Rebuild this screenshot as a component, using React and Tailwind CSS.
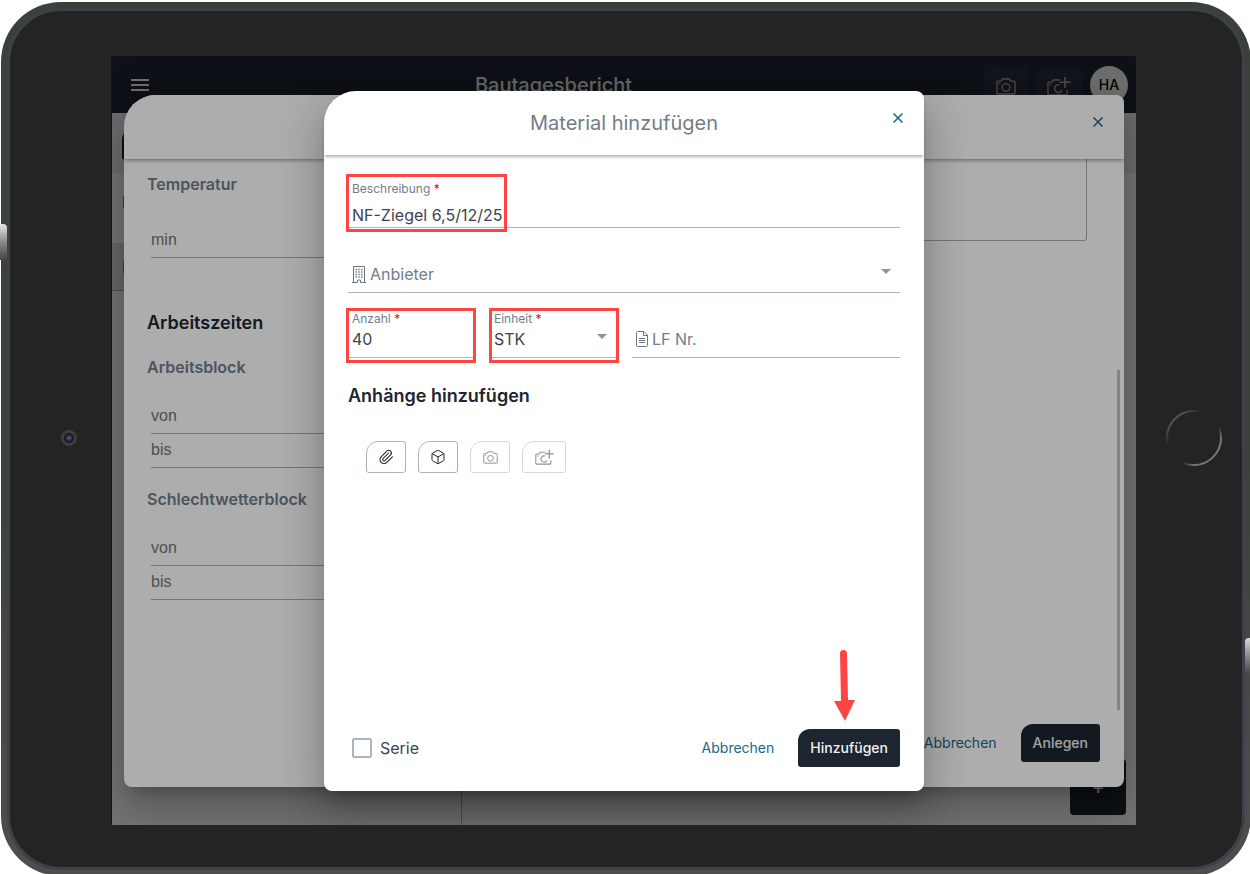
import { useState } from "react";
import { Box, Paperclip } from "lucide-react";

const lineCls = "w-full bg-transparent border-b border-[#a9b5c2] outline-none text-base text-[#3b444f] placeholder:text-[#727d8a] placeholder:opacity-100";
const timeCls = "block w-full h-[34px] pb-px bg-transparent border-b border-[#a9b0bc] outline-none text-base font-['Liberation_Sans',sans-serif] placeholder:text-[#757575] placeholder:opacity-100";
const primaryCls = "h-[38px] px-3 rounded-[3px] rounded-tl-xl bg-[#1d2530] text-sm font-medium text-[#f2f2f2]";
const attachCls = "h-8 flex items-center justify-center rounded-[3px] rounded-tl-xl border border-[#aab4c1] text-[#1d2530]";
const markCls = "absolute border-3 border-[#ff4444] pointer-events-none";

function CameraIcon({ className }) {
  return (
    <svg className={className} viewBox="0 0 20 17" fill="none" stroke="currentColor" strokeWidth="1.3">
      <path d="M1 4.2q0-1 1-1h3.2L6.4 1h7l1.2 2.2H18q1 0 1 1V15q0 1-1 1H2q-1 0-1-1z" />
      <circle cx="10" cy="9.5" r="3.8" />
      <path d="M2.6 5.6h1.6" />
    </svg>
  );
}

function CameraPlusIcon({ className }) {
  return (
    <svg className={className} viewBox="0 0 24 20" fill="none" stroke="currentColor" strokeWidth="1.3">
      <path d="M13 4H6.4L5.2 6.2H2q-1 0-1 1V18q0 1 1 1h17q1 0 1-1v-4" />
      <path d="M12.6 8.8a3.9 3.9 0 1 0 2.4 5.6M2.6 8.6h1.6" />
      <path d="M18 1v11M12.5 6.2h11" strokeWidth="1.6" />
    </svg>
  );
}

function BuildingIcon() {
  return (
    <svg className="w-[14px] h-[17px] shrink-0 text-[#6a7684]" viewBox="0 0 14 17" fill="none" stroke="currentColor">
      <path d="M1.5 16V.5h11V16M0 16.5h5.5M8.5 16.5H14M5.5 16.5v-2.5h3v2.5" />
      <path d="M3.5 3.5h7M3.5 6h7M3.5 8.5h7M3.5 11h7" strokeWidth="1.3" strokeDasharray="1.4 1.4" />
    </svg>
  );
}

function FileIcon() {
  return (
    <svg className="w-3 h-4 shrink-0 text-[#6a7684]" viewBox="0 0 12 16" fill="none" stroke="currentColor">
      <path d="M1.5.5H8L11.5 4v10.5q0 1-1 1h-9q-1 0-1-1v-13q0-1 1-1zM7.5.5v4h4" />
      <path d="M3 7.5h6M3 9.5h6M3 11.5h6" />
    </svg>
  );
}

function CloseButton() {
  return (
    <button aria-label="Schließen" className="absolute right-[21px] top-[22px] leading-none text-[#1c6688]">
      <svg className="w-[10px] h-[10px]" viewBox="0 0 10 10" stroke="currentColor" strokeWidth="1.5">
        <path d="M.5.5l9 9M9.5.5l-9 9" />
      </svg>
    </button>
  );
}

function Caret({ className }) {
  return (
    <svg className={`absolute w-[10px] h-[5px] text-[#8a96a6] pointer-events-none ${className}`} viewBox="0 0 10 5" fill="currentColor">
      <path d="M0 0h10L5 5z" />
    </svg>
  );
}

function FieldLabel({ id, children }) {
  return (
    <label htmlFor={id} className="block pl-1 text-xs leading-4 text-[#727d8a]">
      {children} <span className="text-[#c8102e]">*</span>
    </label>
  );
}

function TimeBlock({ title }) {
  return (
    <>
      <h3 className="mt-[19px] mb-[21px] text-base leading-6 font-semibold text-[#717c89]">{title}</h3>
      <div className="ml-1">
        <input aria-label={`${title} von`} placeholder="von" className={timeCls} />
        <input aria-label={`${title} bis`} placeholder="bis" className={timeCls} />
      </div>
    </>
  );
}

function ReportPage() {
  return (
    <div className="h-full flex flex-col bg-white">
      <header className="h-[57px] shrink-0 flex items-start pt-2.5 pl-[19px] pr-2 bg-[#1f2834]">
        <button aria-label="Menü" className="mt-[13px] flex flex-col gap-[3px]">
          <span className="w-[18px] h-0.5 bg-[#f0f0f0]" />
          <span className="w-[18px] h-0.5 bg-[#f0f0f0]" />
          <span className="w-[18px] h-0.5 bg-[#f0f0f0]" />
        </button>
        <h1 className="flex-1 pr-[26px] pt-[5px] text-center text-xl leading-7 font-medium text-[#e8e8e8]">Bautagesbericht</h1>
        <div className="flex gap-2">
          <button aria-label="Foto" className="w-[43px] h-10 flex justify-center items-center rounded-[3px] rounded-tl-xl bg-[#272f3b] text-[#a4a7ab]">
            <CameraIcon className="w-5 h-[17px]" />
          </button>
          <button aria-label="Foto hinzufügen" className="w-[47px] h-10 flex justify-center items-center rounded-[3px] rounded-tl-xl bg-[#272f3b] text-[#a4a7ab]">
            <CameraPlusIcon className="w-6 h-5" />
          </button>
          <button className="w-[38px] h-[38px] rounded-full bg-[#f0f0f0] text-sm font-medium text-black">HA</button>
        </div>
      </header>
      <div className="h-[59px] shrink-0 px-[10px] pt-[15px] bg-[#eceef2] shadow">
        <div className="w-24 h-8 rounded-[3px] rounded-tl-xl bg-[#1d2530]" />
      </div>
      <div className="flex-1 flex">
        <ul className="w-[350px] border-r border-[#a9b0bc]">
          <li className="h-[71px] pt-6 pl-[11px]"><span className="block w-5 h-3 bg-[#b87a33]" /></li>
          <li className="h-12 pt-[18px] pl-[11px] bg-[#dfe2e6] border-b border-[#a9b0bc]"><span className="block w-5 h-3 bg-[#b87a33]" /></li>
        </ul>
        <div className="flex-1 flex items-end justify-end p-2.5">
          <button className="w-14 h-14 rounded rounded-tl-xl bg-[#1d2530] text-xl text-white">+</button>
        </div>
      </div>
    </div>
  );
}

function ReportDialog() {
  return (
    <section className="relative w-full h-full flex flex-col rounded-lg rounded-tl-[32px] overflow-hidden bg-white">
      <header className="relative z-10 h-16 shrink-0 bg-white shadow-[0_1px_4px_rgba(0,0,0,0.45)]">
        <CloseButton />
      </header>
      <div className="flex-1 flex">
        <div className="flex-1 grid grid-cols-2 pl-[23px] pr-[30px]">
          <div className="pt-[13px]">
            <h3 className="mb-7 text-base leading-6 font-semibold text-[#717c89]">Temperatur</h3>
            <div className="ml-1">
              <input aria-label="Temperatur min" placeholder="min" className={timeCls} />
            </div>
            <h2 className="mt-[51px] text-lg leading-[27px] font-semibold text-[#1d2530]">Arbeitszeiten</h2>
            <TimeBlock title="Arbeitsblock" />
            <TimeBlock title="Schlechtwetterblock" />
          </div>
          <textarea aria-label="Bemerkung" className="block w-full h-[82px] resize-none rounded-b-[3px] border border-t-0 border-[#a3afbd] outline-none" />
        </div>
        <div className="w-[7px] flex items-end">
          <div className="w-[3px] h-[340px] mb-px bg-[#c0c0c0]" />
        </div>
      </div>
      <footer className="h-[76px] shrink-0 flex items-start justify-end gap-6 pt-[13px] pr-6">
        <button className="h-[38px] text-sm text-[#1c6688]">Abbrechen</button>
        <button className={primaryCls}>Anlegen</button>
      </footer>
    </section>
  );
}

function MaterialDialog() {
  const [form, setForm] = useState({ text: "NF-Ziegel 6,5/12/25", vendor: "", count: "40", unit: "STK", lf: "", serie: false });
  const set = (k, v) => setForm((p) => ({ ...p, [k]: v }));

  return (
    <section className="w-[600px] h-full flex flex-col rounded-lg rounded-tl-[32px] bg-white shadow-[0_11px_15px_-7px_rgba(0,0,0,0.2),0_24px_38px_3px_rgba(0,0,0,0.14),0_9px_46px_8px_rgba(0,0,0,0.12)]">
      <header className="relative h-16 shrink-0 flex items-center justify-center rounded-t-lg rounded-tl-[32px] shadow-[0_3px_3px_-1px_rgba(0,0,0,0.3)]">
        <h2 className="text-xl text-[#727d8a]">Material hinzufügen</h2>
        <CloseButton />
      </header>

      <div className="flex-1 px-6 pt-[26px]">
        <div className="relative">
          <FieldLabel id="text">Beschreibung</FieldLabel>
          <input id="text" className={`${lineCls} block h-[25px] mt-1.5 pl-1`} value={form.text} onChange={(e) => set("text", e.target.value)} />
          <div className={`${markCls} w-[161px] -left-0.5 -top-[7px] -bottom-1`} />
        </div>

        <div className="relative flex items-center h-[37px] mt-7 pl-1 gap-1 border-b border-[#a9b5c2]">
          <BuildingIcon />
          <select aria-label="Anbieter" className="flex-1 appearance-none bg-transparent outline-none text-base text-[#727d8a]" value={form.vendor} onChange={(e) => set("vendor", e.target.value)}>
            <option value="">Anbieter</option>
          </select>
          <Caret className="right-[9px] top-[13px]" />
        </div>

        <div className="flex items-end gap-3.5 mt-[18px]">
          <div className="relative w-32">
            <FieldLabel id="count">Anzahl</FieldLabel>
            <input id="count" className={`${lineCls} block h-[31px] pb-1.5 pl-1`} value={form.count} onChange={(e) => set("count", e.target.value)} />
            <div className={`${markCls} -left-0.5 right-0 -top-[3px] -bottom-[5px]`} />
          </div>
          <div className="relative w-32">
            <FieldLabel id="unit">Einheit</FieldLabel>
            <div className="relative">
              <select id="unit" className={`${lineCls} block h-[31px] pb-1.5 pl-1 appearance-none`} value={form.unit} onChange={(e) => set("unit", e.target.value)}>
                <option>STK</option>
              </select>
              <Caret className="right-[11px] top-[7px]" />
            </div>
            <div className={`${markCls} -left-px -right-px -top-[3px] -bottom-[5px]`} />
          </div>
          <div className="flex-1 flex items-center h-[37px] pl-1 gap-1 border-b border-[#a9b5c2]">
            <FileIcon />
            <input aria-label="LF Nr." placeholder="LF Nr." className="flex-1 min-w-0 bg-transparent outline-none text-base placeholder:text-[#727d8a]" value={form.lf} onChange={(e) => set("lf", e.target.value)} />
          </div>
        </div>

        <h3 className="mt-6 text-lg leading-7 font-semibold text-[#1d2530]">Anhänge hinzufügen</h3>
        <div className="flex gap-3 mt-[31px] ml-[18px]">
          <button aria-label="Datei" className={`${attachCls} w-10`}><Paperclip size={16} strokeWidth={1.6} /></button>
          <button aria-label="Modell" className={`${attachCls} w-10`}><Box size={16} strokeWidth={1.5} /></button>
          <button aria-label="Kamera" disabled className={`${attachCls} w-10 opacity-50`}><CameraIcon className="w-[15px] h-[13px]" /></button>
          <button aria-label="Kamera hinzufügen" disabled className={`${attachCls} w-11 opacity-50`}><CameraPlusIcon className="w-[19px] h-4" /></button>
        </div>
      </div>

      <footer className="flex items-center px-6 pb-6">
        <label className="flex items-center gap-2 pl-1 text-base text-[#3b444f]">
          <input type="checkbox" className="appearance-none w-5 h-5 border-2 border-[#a9b5c2] rounded-xs checked:bg-[#1d2530]" checked={form.serie} onChange={(e) => set("serie", e.target.checked)} />
          Serie
        </label>
        <button className="ml-auto mr-6 h-[38px] text-sm text-[#1c6688]">Abbrechen</button>
        <div className="relative">
          <button className={primaryCls}>Hinzufügen</button>
          <svg className="absolute bottom-full left-9 mb-2 w-[22px] h-[71px] pointer-events-none" viewBox="0 0 22 71" fill="#ff4444">
            <path d="M6 3.5a3.5 3.5 0 0 1 7 0L14 50h7L11 71 0 51h7z" />
          </svg>
        </div>
      </footer>
    </section>
  );
}

export default function App() {
  return (
    <main className="flex min-h-screen overflow-hidden bg-white pt-0.5 pl-px font-['Inter',sans-serif]">
      {/* tablet housing */}
      <div className="relative flex-1 flex -mr-px -mb-0.5 p-1.5 rounded-[60px] bg-linear-to-b from-[#3b403a] via-[#3b403a] to-[#4d4f4c]">
        <div className="absolute -left-px top-[222px] w-[7px] h-9 rounded-tr-sm bg-linear-to-b from-[#e8e8e8] via-[#8a8a8a] to-[#454744]" />
        <div className="absolute right-0 top-[636px] w-1.5 h-9 rounded-tl-sm bg-linear-to-b from-[#d8d8d8] via-[#8a8a8a] to-[#454744]" />
        <div className="flex-1 flex pt-[45px] pb-[42px] rounded-[54px] border-3 border-[#3d414b] bg-[#242424]">
          <div className="w-[101px] shrink-0 flex items-center justify-center pl-4 pb-1.5">
            <div className="w-4 h-4 flex items-center justify-center rounded-full bg-[#3d3d3d]">
              <div className="w-2.5 h-2.5 flex items-center justify-center rounded-full border-2 border-[#1c1926] bg-[#40345c]">
                <div className="w-0.5 h-0.5 rounded-full bg-[#6a5f88]" />
              </div>
            </div>
          </div>
          <div className="relative flex-1 border-l border-[#161616] overflow-hidden">
            <ReportPage />
            <div className="absolute inset-0 z-10 bg-black/32 pt-[39px] pb-[38px] px-3">
              <div className="h-full rounded-lg rounded-tl-[32px] shadow-[0_11px_15px_-7px_rgba(0,0,0,0.2),0_24px_38px_3px_rgba(0,0,0,0.14),0_9px_46px_8px_rgba(0,0,0,0.12)]">
                <ReportDialog />
              </div>
            </div>
            <div className="absolute inset-0 z-20 flex justify-center bg-black/32 pt-[35px] pb-[34px]">
              <MaterialDialog />
            </div>
          </div>
          <div className="w-[106px] shrink-0 flex items-center justify-center pl-2.5 pb-1.5">
            <svg className="w-14 h-14" viewBox="0 0 56 56" fill="none" strokeWidth="2">
              <defs>
                <linearGradient id="ring" x1="0" y1="0" x2="1" y2="1">
                  <stop offset="0.15" stopColor="#555" />
                  <stop offset="0.32" stopColor="#242424" />
                  <stop offset="0.62" stopColor="#242424" />
                  <stop offset="0.75" stopColor="#777" />
                  <stop offset="1" stopColor="#777" />
                </linearGradient>
              </defs>
              <circle cx="28" cy="28" r="27" stroke="url(#ring)" />
            </svg>
          </div>
        </div>
      </div>
    </main>
  );
}
